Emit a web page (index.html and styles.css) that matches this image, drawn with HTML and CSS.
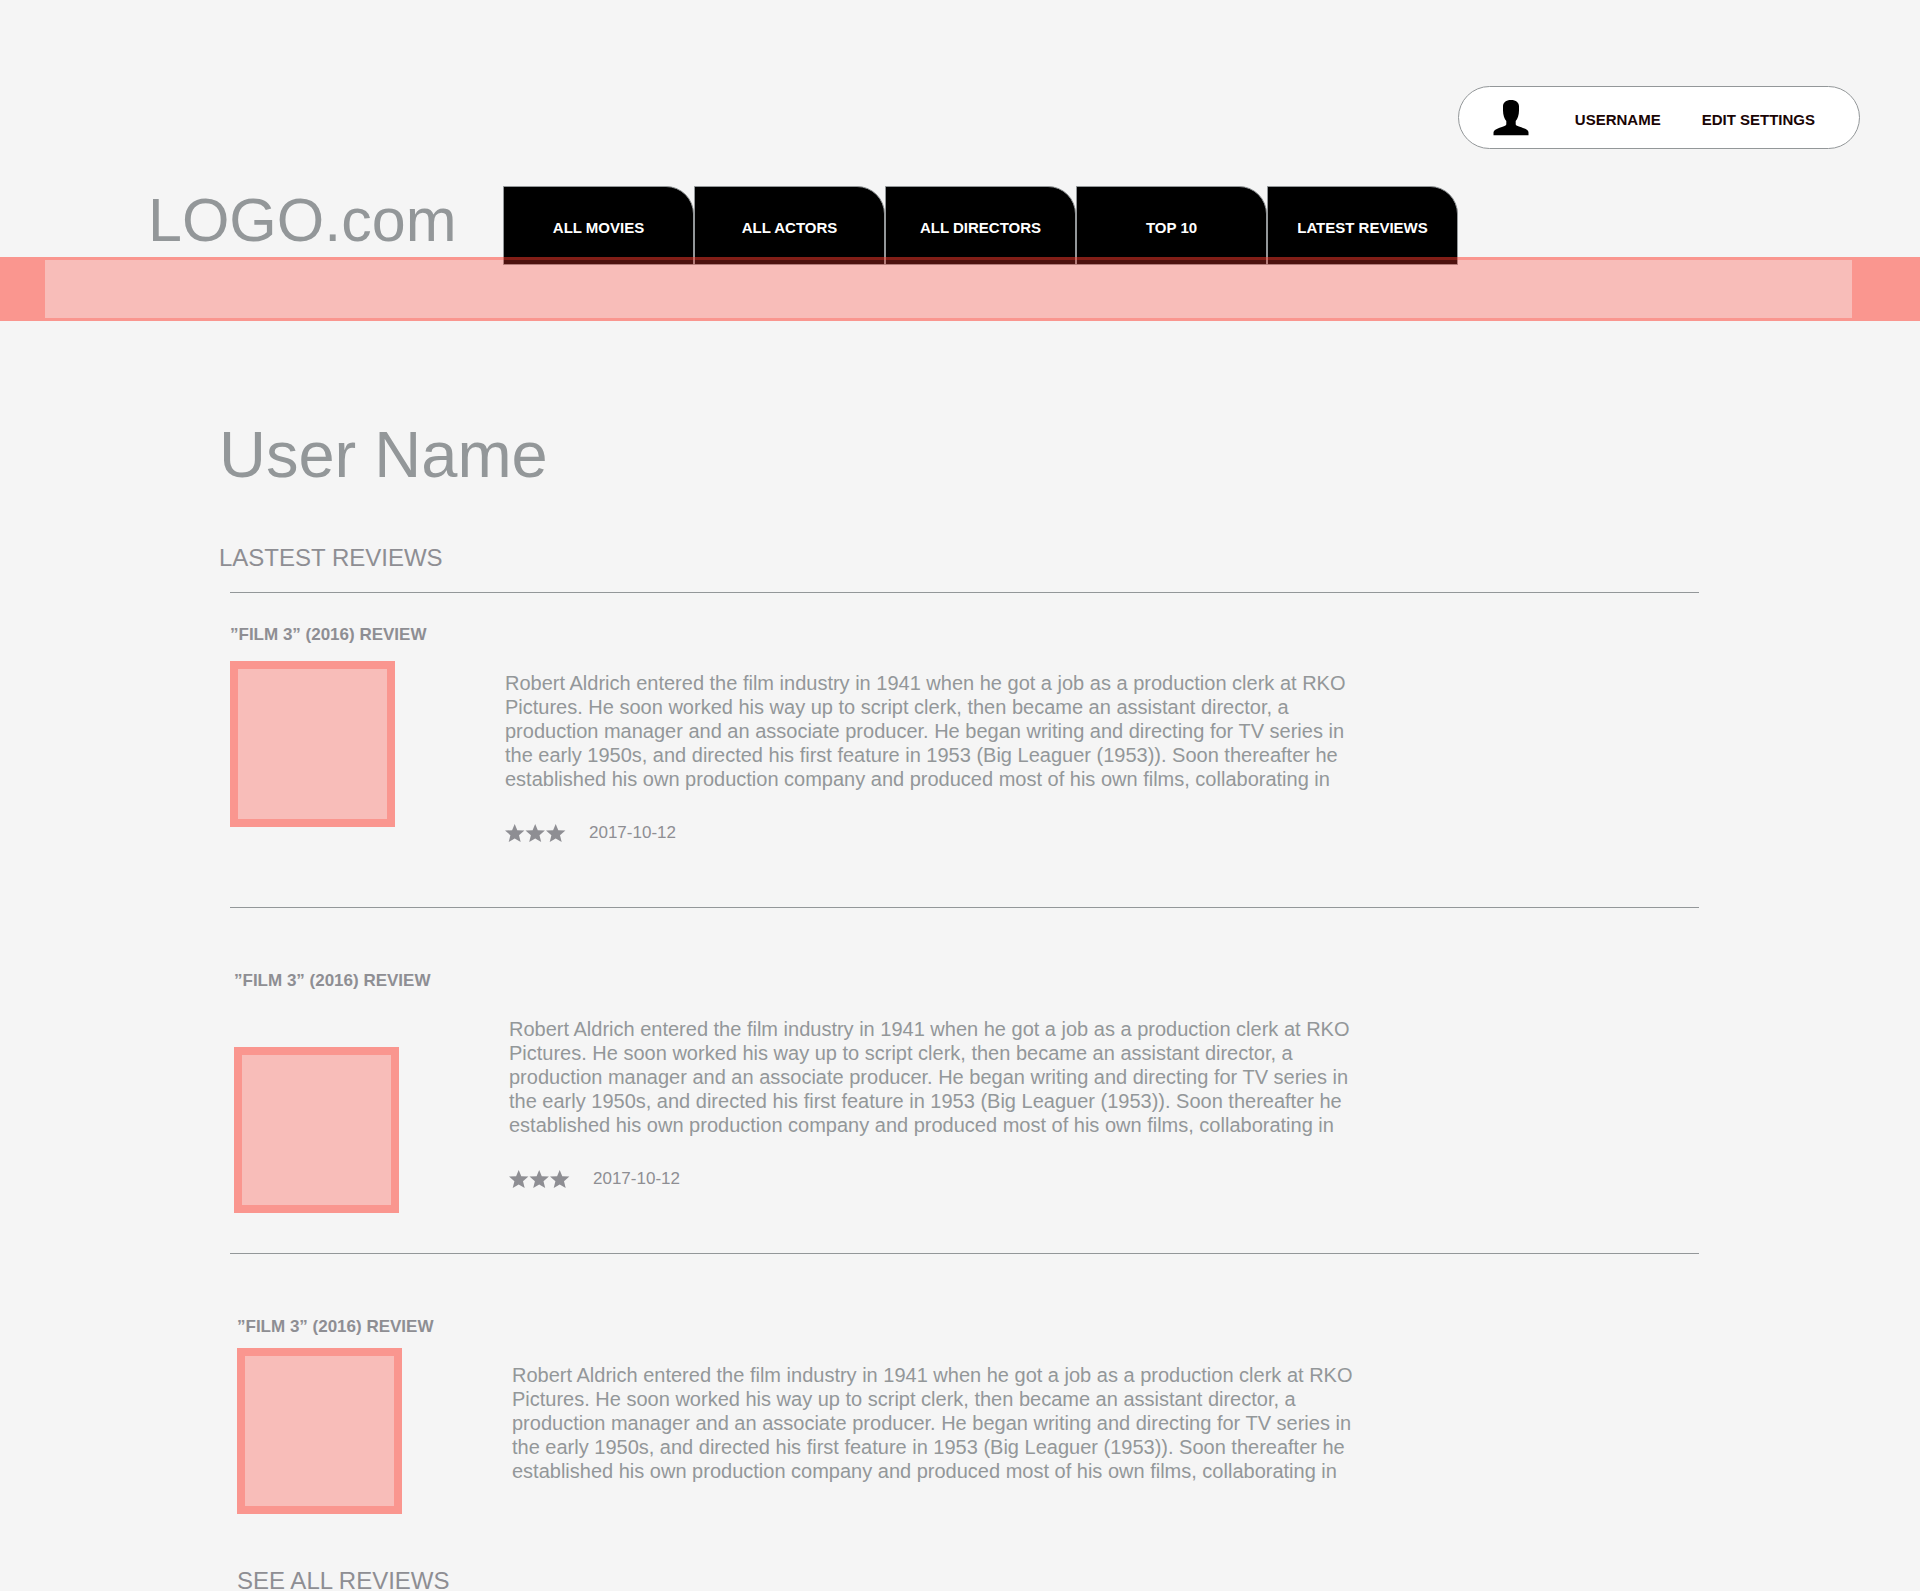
FILE: index.html
```html
<!DOCTYPE html>
<html lang="en">
<head>
<meta charset="utf-8">
<meta name="viewport" content="width=device-width, initial-scale=1">
<title>User Name – LOGO.com</title>
<link rel="stylesheet" href="styles.css">
</head>
<body>
<svg class="sprite" aria-hidden="true">
  <symbol id="stars" viewBox="0 0 61 18">
    <path id="star" d="M9.700 0 12.300 6.200 19.400 6.600 14 11.200 15.700 18 9.700 14.400 3.700 18 5.400 11.200 0 6.600 7.100 6.200Z"/>
    <use href="#star" x="20.500"/>
    <use href="#star" x="41"/>
  </symbol>
</svg>

<header class="header">
  <div class="account">
    <svg class="account-icon" viewBox="0 0 36 36" aria-hidden="true">
      <path d="M18 0C23 0 26 2.600 26 6.500V10.500C26 15 24.500 19 22.700 21V24.500C23.500 27 35.500 28 35.500 32.500V35.300H0.500V32.500C0.500 28 12.500 27 13.300 24.500V21C11.500 19 10 15 10 10.500V6.500C10 2.600 13 0 18 0Z"/>
    </svg>
    <div class="account-links">
      <a href="#">USERNAME</a>
      <a href="#">EDIT SETTINGS</a>
    </div>
  </div>
  <div class="masthead">
    <a class="logo" href="#">LOGO.com</a>
    <nav class="tabs">
      <a class="tab" href="#">ALL MOVIES</a>
      <a class="tab" href="#">ALL ACTORS</a>
      <a class="tab" href="#">ALL DIRECTORS</a>
      <a class="tab" href="#">TOP 10</a>
      <a class="tab" href="#">LATEST REVIEWS</a>
    </nav>
  </div>
  <div class="band"></div>
</header>

<main class="profile">
  <h1 class="profile-name">User Name</h1>
  <h2 class="section-title">LASTEST REVIEWS</h2>

  <div class="reviews">
    <article class="review review--first">
      <h3 class="review-title">”FILM 3” (2016) REVIEW</h3>
      <div class="review-row">
        <div class="poster"></div>
        <div class="review-body">
          <p class="review-text">Robert Aldrich entered the film industry in 1941 when he got a job as a production clerk at RKO Pictures. He soon worked his way up to script clerk, then became an assistant director, a production manager and an associate producer. He began writing and directing for TV series in the early 1950s, and directed his first feature in 1953 (Big Leaguer (1953)). Soon thereafter he established his own production company and produced most of his own films, collaborating in</p>
          <div class="review-meta">
            <svg class="stars" role="img" aria-label="3 stars"><use href="#stars"/></svg>
            <time datetime="2017-10-12">2017-10-12</time>
          </div>
        </div>
      </div>
    </article>

    <article class="review review--second">
      <h3 class="review-title">”FILM 3” (2016) REVIEW</h3>
      <div class="review-row">
        <div class="poster poster--low"></div>
        <div class="review-body">
          <p class="review-text">Robert Aldrich entered the film industry in 1941 when he got a job as a production clerk at RKO Pictures. He soon worked his way up to script clerk, then became an assistant director, a production manager and an associate producer. He began writing and directing for TV series in the early 1950s, and directed his first feature in 1953 (Big Leaguer (1953)). Soon thereafter he established his own production company and produced most of his own films, collaborating in</p>
          <div class="review-meta">
            <svg class="stars" role="img" aria-label="3 stars"><use href="#stars"/></svg>
            <time datetime="2017-10-12">2017-10-12</time>
          </div>
        </div>
      </div>
    </article>

    <article class="review review--third">
      <h3 class="review-title">”FILM 3” (2016) REVIEW</h3>
      <div class="review-row">
        <div class="poster poster--tight"></div>
        <div class="review-body">
          <p class="review-text">Robert Aldrich entered the film industry in 1941 when he got a job as a production clerk at RKO Pictures. He soon worked his way up to script clerk, then became an assistant director, a production manager and an associate producer. He began writing and directing for TV series in the early 1950s, and directed his first feature in 1953 (Big Leaguer (1953)). Soon thereafter he established his own production company and produced most of his own films, collaborating in</p>
        </div>
      </div>
      <a class="see-all" href="#">SEE ALL REVIEWS</a>
    </article>
  </div>
</main>
</body>
</html>
```

FILE: styles.css
```css
:root {
  --page: #f5f5f5;
  --slate: #939799;
  --grey: #8e8e93;
  --tint: rgba(255, 59, 48, 0.3);
}

* {
  box-sizing: border-box;
}

body {
  margin: 0;
  background: var(--page);
  color: var(--slate);
  font-family: "Liberation Sans", Arial, Helvetica, sans-serif;
}

a {
  color: inherit;
  text-decoration: none;
}

h1,
h2,
h3,
p {
  margin: 0;
  font-weight: 400;
}

.sprite {
  display: none;
}

/* Header */

.header {
  display: flex;
  flex-direction: column;
  padding-top: 86px;
}

.account {
  display: flex;
  align-items: center;
  align-self: flex-end;
  gap: 46px;
  height: 63px;
  margin-right: 60px;
  padding: 0 44px 0 34px;
  border: 1px solid var(--slate);
  border-radius: 32px;
  background: #fff;
  color: #1a0505;
}

.account-icon {
  width: 36px;
  height: 36px;
  fill: #000;
}

.account-links {
  display: flex;
  gap: 41px;
  padding-top: 4px;
  font-size: 15px;
  font-weight: 700;
}

.masthead {
  display: grid;
  grid-template-columns: 355px 1fr;
  margin-top: 37px;
  padding-left: 148px;
}

.logo {
  font-size: 61px;
  line-height: 68px;
}

.tabs {
  display: flex;
}

.tab {
  display: flex;
  align-items: center;
  justify-content: center;
  width: 191px;
  height: 79px;
  padding-top: 4px;
  border: 1px solid var(--slate);
  border-top-right-radius: 28px;
  background: #000;
  color: #fff;
  font-size: 15px;
  font-weight: 700;
}

/* Translucent strip laid over the feet of the tabs */
.band {
  position: relative;
  height: 64px;
  margin-top: -8px;
  border: solid var(--tint);
  border-width: 3px 68px 3px 45px;
  background: var(--tint);
}

/* Profile */

.profile {
  padding: 102px 221px 0 219px;
}

.profile-name {
  margin-bottom: 61px;
  font-size: 65px;
  line-height: 64px;
}

.section-title,
.see-all {
  color: var(--grey);
  font-size: 24px;
  line-height: 20px;
}

.section-title {
  margin-bottom: 24px;
}

.reviews {
  margin-left: 11px;
}

.review {
  padding-top: 63px;
  border-top: 1px solid var(--slate);
}

.review--first {
  padding-top: 32px;
}

.review--second {
  padding-left: 4px;
}

.review--third {
  padding-left: 7px;
}

.review-title {
  color: var(--grey);
  font-size: 17px;
  font-weight: 700;
  line-height: 20px;
}

.review-row {
  display: grid;
  grid-template-columns: 275px minmax(0, 856px);
  align-items: start;
}

.poster {
  width: 165px;
  height: 166px;
  margin-top: 16px;
  border: 8px solid var(--tint);
  background: var(--tint);
}

.poster--low {
  margin-top: 56px;
}

.poster--tight {
  margin-top: 11px;
}

.review-body {
  padding-top: 26px;
}

.review-text {
  font-size: 20px;
  line-height: 24px;
}

.review-meta {
  display: flex;
  align-items: center;
  gap: 23px;
  margin: 32px 0 64px;
  color: var(--grey);
  font-size: 17px;
  line-height: 20px;
}

.stars {
  width: 61px;
  height: 18px;
  fill: currentColor;
}

.see-all {
  display: block;
  margin-top: 57px;
}
```
